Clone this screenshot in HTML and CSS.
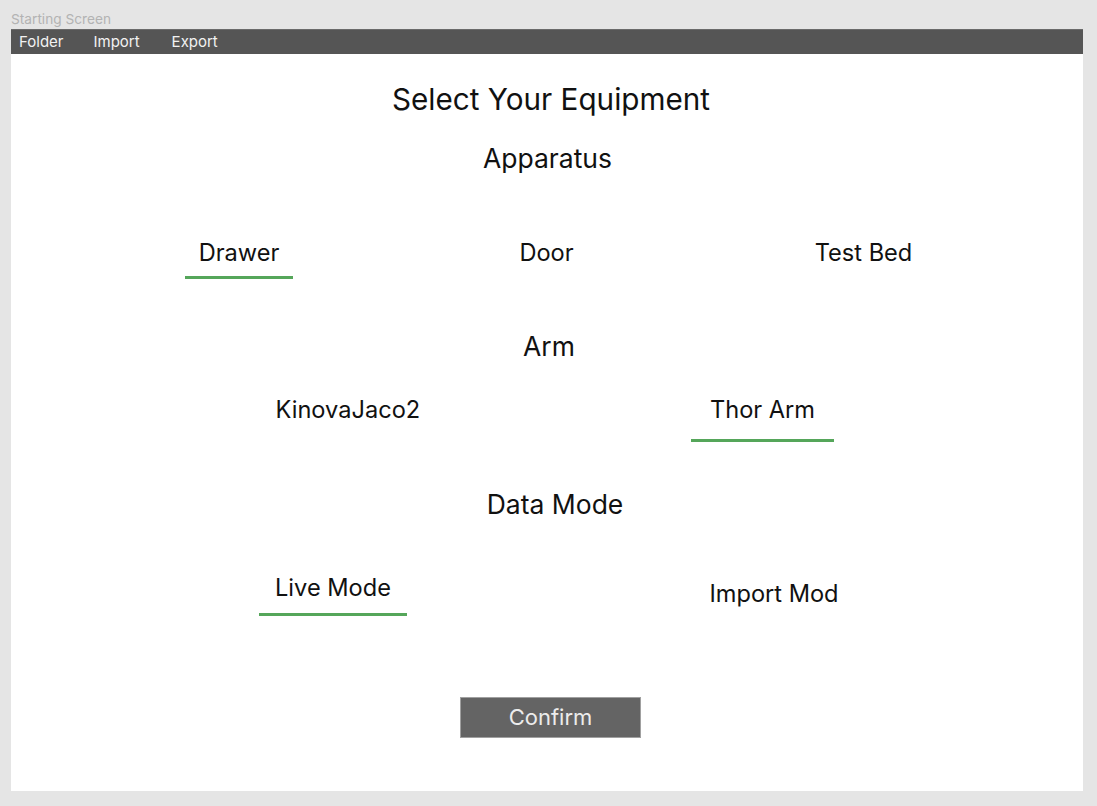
FILE: index.html
```html
<!DOCTYPE html>
<html lang="en">
<head>
<meta charset="utf-8">
<title>Starting Screen</title>
<link rel="stylesheet" href="styles.css">
</head>
<body>
<div class="screen-label">Starting Screen</div>
<div class="panel">
  <nav class="menubar">
    <span class="menu-item">Folder</span>
    <span class="menu-item">Import</span>
    <span class="menu-item menu-export">Export</span>
  </nav>
  <h1 class="title">Select Your Equipment</h1>
  <h2 class="section section-apparatus">Apparatus</h2>
  <div class="options options-1">
    <div class="option opt-drawer selected"><span class="label">Drawer</span><span class="bar"></span></div>
    <div class="option opt-door"><span class="label">Door</span><span class="bar"></span></div>
    <div class="option opt-testbed"><span class="label">Test Bed</span><span class="bar"></span></div>
  </div>
  <h2 class="section section-arm">Arm</h2>
  <div class="options options-2">
    <div class="option opt-kinova"><span class="label">KinovaJaco2</span><span class="bar"></span></div>
    <div class="option opt-thor selected"><span class="label">Thor Arm</span><span class="bar"></span></div>
  </div>
  <h2 class="section section-data">Data Mode</h2>
  <div class="options options-3">
    <div class="option opt-live selected"><span class="label">Live Mode</span><span class="bar"></span></div>
    <div class="option opt-import"><span class="label">Import Mod</span><span class="bar"></span></div>
  </div>
  <div class="confirm-row">
    <button class="confirm">Confirm</button>
  </div>
</div>
</body>
</html>
```

FILE: styles.css
```css
* { box-sizing: border-box; }
html, body { margin: 0; padding: 0; }
body {
  background: #e5e5e5;
  font-family: Inter, "Noto Sans", "Liberation Sans", sans-serif;
  color: #111;
  width: 1097px;
  height: 806px;
  overflow: hidden;
}
.screen-label {
  height: 29px;
  padding: 11px 0 0 11px;
  font-size: 13.7px;
  line-height: 16px;
  color: #b3b3b3;
}
.panel {
  margin-left: 11px;
  width: 1072px;
  height: 762px;
  background: #fff;
  display: flex;
  flex-direction: column;
}
.menubar {
  height: 25px;
  flex: none;
  background: #555555;
  border-top: 1px solid #6a6a6a;
  display: flex;
  align-items: center;
  padding-left: 8px;
  gap: 30px;
}
.menu-export { margin-left: 2px; }
.menu-item {
  color: #f2f2f2;
  font-size: 15px;
  line-height: 18px;
}
.title {
  margin: 25px 0 0 0;
  height: 40px;
  line-height: 40px;
  font-size: 29.7px;
  font-weight: 400;
  text-align: center;
  padding-left: 8px;
}
.section {
  margin: 0;
  height: 30px;
  line-height: 30px;
  font-size: 26.5px;
  font-weight: 400;
  text-align: center;
}
.section-apparatus { margin-top: 24px; padding-left: 1px; }
.section-arm { margin-top: 52px; padding-left: 4px; }
.section-data { margin-top: 47px; padding-left: 16px; }

.options {
  display: flex;
  align-items: flex-start;
}
.option {
  display: flex;
  flex-direction: column;
  align-items: stretch;
}
.label {
  display: block;
  height: 30px;
  line-height: 30px;
  font-size: 23.6px;
  text-align: center;
  white-space: nowrap;
}
.bar {
  display: block;
  height: 3px;
  background: transparent;
}
.selected .bar { background: #55a65a; }

.options-1 { margin-top: 65px; }
.options-1 .bar { margin-top: 8px; }
.opt-drawer { width: 108px; margin-left: 174px; }
.opt-door { width: 108px; margin-left: 199.5px; }
.opt-testbed { width: 108px; margin-left: 209px; }

.options-2 { margin-top: 34px; }
.options-2 .bar { margin-top: 14px; }
.opt-kinova { width: 143px; margin-left: 264.5px; }
.opt-thor { width: 143px; margin-left: 272.5px; }

.options-3 { margin-top: 54px; }
.options-3 .bar { margin-top: 10px; }
.opt-live { width: 148px; margin-left: 248px; }
.opt-import { width: 148px; margin-left: 293px; margin-top: 6px; }

.confirm-row {
  margin-top: 75px;
  display: flex;
  padding-left: 449px;
}
.confirm {
  width: 181px;
  height: 41px;
  background: #646464;
  border: 1px solid #a0a0a0;
  color: #ececec;
  font-family: Inter, "Noto Sans", "Liberation Sans", sans-serif;
  font-size: 22px;
  line-height: 39px;
  padding: 0;
}
```
